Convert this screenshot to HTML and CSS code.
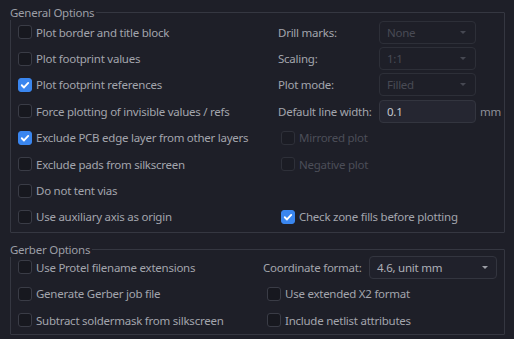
FILE: index.html
```html
<!DOCTYPE html>
<html>
<head>
<meta charset="utf-8">
<link rel="stylesheet" href="styles.css">
</head>
<body>
<div class="dialog">
  <section class="group general">
    <div class="group-title">General Options</div>
    <div class="group-body general-body">
      <div class="col left-col">
        <label class="check"><span class="box"></span>Plot border and title block</label>
        <label class="check"><span class="box"></span>Plot footprint values</label>
        <label class="check"><span class="box on"><svg viewBox="0 0 13 13"><path d="M3 6.8 L5.4 9.2 L10 4.2"/></svg></span>Plot footprint references</label>
        <label class="check"><span class="box"></span>Force plotting of invisible values / refs</label>
        <label class="check"><span class="box on"><svg viewBox="0 0 13 13"><path d="M3 6.8 L5.4 9.2 L10 4.2"/></svg></span>Exclude PCB edge layer from other layers</label>
        <label class="check"><span class="box"></span>Exclude pads from silkscreen</label>
        <label class="check"><span class="box"></span>Do not tent vias</label>
        <label class="check"><span class="box"></span>Use auxiliary axis as origin</label>
      </div>
      <div class="col right-col">
        <div class="field"><span class="flabel">Drill marks:</span><span class="combo disabled">None<i class="arrow"></i></span></div>
        <div class="field"><span class="flabel">Scaling:</span><span class="combo disabled">1:1<i class="arrow"></i></span></div>
        <div class="field"><span class="flabel">Plot mode:</span><span class="combo disabled">Filled<i class="arrow"></i></span></div>
        <div class="field"><span class="flabel">Default line width:</span><span class="textin">0.1</span><span class="unit">mm</span></div>
        <label class="check sub disabled"><span class="box"></span>Mirrored plot</label>
        <label class="check sub disabled"><span class="box"></span>Negative plot</label>
        <div class="spacer"></div>
        <label class="check sub"><span class="box on"><svg viewBox="0 0 13 13"><path d="M3 6.8 L5.4 9.2 L10 4.2"/></svg></span>Check zone fills before plotting</label>
      </div>
    </div>
  </section>
  <section class="group gerber">
    <div class="group-title">Gerber Options</div>
    <div class="group-body gerber-body">
      <div class="col left-col">
        <label class="check"><span class="box"></span>Use Protel filename extensions</label>
        <label class="check"><span class="box"></span>Generate Gerber job file</label>
        <label class="check"><span class="box"></span>Subtract soldermask from silkscreen</label>
      </div>
      <div class="col gerber-right">
        <div class="field"><span class="flabel g">Coordinate format:</span><span class="combo wide">4.6, unit mm<i class="arrow"></i></span></div>
        <label class="check gsub"><span class="box"></span>Use extended X2 format</label>
        <label class="check gsub"><span class="box"></span>Include netlist attributes</label>
      </div>
    </div>
  </section>
</div>
</body>
</html>
```

FILE: styles.css
```css
html, body {
  margin: 0;
  padding: 0;
  background: #1e1f28;
  width: 514px;
  height: 339px;
  overflow: hidden;
}
body {
  font-family: "Noto Sans", "Open Sans", sans-serif;
  font-size: 11.5px;
  letter-spacing: -0.25px;
  color: #a3a5ad;
}
.dialog {
  padding: 12px 9px 0 10px;
  display: flex;
  flex-direction: column;
  gap: 16px;
}
.group {
  border: 1px solid #353741;
  border-radius: 1px;
}
.group-title {
  display: table;
  margin: -8px 0 0 -1px;
  padding: 0 2px 0 0;
  height: 15px;
  line-height: 15px;
  background: #1e1f28;
  color: #9c9ea6;
}
.group-body {
  display: grid;
  padding: 0 0 0 7px;
}
.general-body {
  grid-template-columns: 260px 1fr;
  margin-top: -1px;
  padding-bottom: 2px;
}
.gerber-body {
  grid-template-columns: 245px 1fr;
  margin-top: -3px;
  padding-bottom: 1px;
}
.col {
  display: grid;
  grid-auto-rows: 26.4px;
  align-items: center;
}
.check {
  display: flex;
  align-items: center;
  gap: 4px;
  white-space: nowrap;
}
.check.sub { padding-left: 3px; }
.check.gsub { padding-left: 4px; }
.check.disabled { color: #4c4e58; }
.box {
  width: 12px;
  height: 12px;
  border: 1px solid #3a3c46;
  border-radius: 3px;
  background: #17181f;
  flex: none;
  display: flex;
}
.check.disabled .box {
  border-color: #2e3039;
  background: #1b1c24;
}
.box.on {
  background: #3a86ef;
  border-color: #3a86ef;
}
.box svg {
  width: 12px;
  height: 12px;
}
.box path {
  fill: none;
  stroke: #ffffff;
  stroke-width: 2;
  stroke-linecap: round;
  stroke-linejoin: round;
}
.field {
  display: flex;
  align-items: center;
  white-space: nowrap;
}
.flabel {
  width: 101px;
  flex: none;
}
.flabel.g { width: 106px; }
.combo, .textin {
  box-sizing: border-box;
  width: 97px;
  height: 23px;
  border: 1px solid #33353f;
  border-radius: 4px;
  padding: 0 0 0 7px;
  display: flex;
  align-items: center;
  position: relative;
}
.combo.disabled {
  color: #494b55;
  border-color: #2d2f38;
}
.combo.wide {
  width: 128px;
  color: #aeb0b8;
  background: #20212b;
}
.textin {
  background: #252631;
  color: #c4c6ce;
}
.arrow {
  width: 0;
  height: 0;
  border-left: 3px solid transparent;
  border-right: 3px solid transparent;
  border-top: 3px solid #464852;
  margin-left: auto;
  margin-right: 9px;
}
.combo.wide .arrow {
  border-top-color: #9c9ea6;
  margin-right: 8px;
}
.unit {
  margin-left: 4px;
  color: #8e9098;
}
```
